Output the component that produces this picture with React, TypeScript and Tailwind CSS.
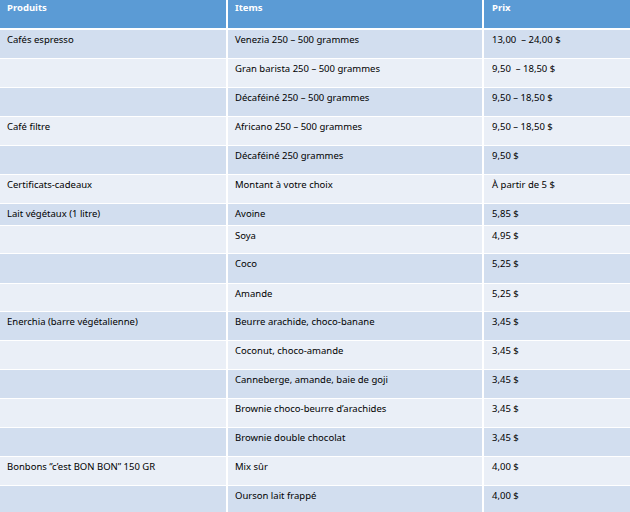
const rows: { product: string; item: string; price: string; h?: string }[] = [
  { product: "Cafés espresso", item: "Venezia 250 – 500 grammes", price: "13,00  – 24,00 $" },
  { product: "", item: "Gran barista 250 – 500 grammes", price: "9,50  – 18,50 $" },
  { product: "", item: "Décaféiné 250 – 500 grammes", price: "9,50 – 18,50 $" },
  { product: "Café filtre", item: "Africano 250 – 500 grammes", price: "9,50 – 18,50 $" },
  { product: "", item: "Décaféiné 250 grammes", price: "9,50 $" },
  { product: "Certificats-cadeaux", item: "Montant à votre choix", price: "À partir de 5 $" },
  { product: "Lait végétaux (1 litre)", item: "Avoine", price: "5,85 $", h: "h-[21px]" },
  { product: "", item: "Soya", price: "4,95 $", h: "h-[27px]" },
  { product: "", item: "Coco", price: "5,25 $", h: "h-[29px]" },
  { product: "", item: "Amande", price: "5,25 $", h: "h-[27px]" },
  { product: "Enerchia (barre végétalienne)", item: "Beurre arachide, choco-banane", price: "3,45 $" },
  { product: "", item: "Coconut, choco-amande", price: "3,45 $" },
  { product: "", item: "Canneberge, amande, baie de goji", price: "3,45 $" },
  { product: "", item: "Brownie choco-beurre d’arachides", price: "3,45 $" },
  { product: "", item: "Brownie double chocolat", price: "3,45 $" },
  { product: "Bonbons ‘’c’est BON BON’’ 150 GR", item: "Mix sûr", price: "4,00 $" },
  { product: "", item: "Ourson lait frappé", price: "4,00 $" },
];

export default function App() {
  return (
    <div
      className="w-[630px] h-[512px] overflow-hidden bg-white text-[9.5px] leading-[14px] text-black"
      style={{ fontFamily: '"Noto Sans", sans-serif' }}
    >
      <div className="grid grid-cols-[226px_254px_1fr] gap-x-[2px] h-[28px] font-bold text-white">
        <div className="bg-[#5b9bd5] pl-[7px] pt-[1px]">Produits</div>
        <div className="bg-[#5b9bd5] pl-[7px] pt-[1px]">Items</div>
        <div className="bg-[#5b9bd5] pl-[8px] pt-[1px]">Prix</div>
      </div>
      <div className="mt-[2px] flex flex-col gap-y-[1px]">
        {rows.map((r, i) => {
          const bg = i % 2 === 0 ? "bg-[#d2deef]" : "bg-[#eaeff7]";
          return (
            <div key={i} className={`grid grid-cols-[226px_254px_1fr] gap-x-[2px] ${r.h ?? "h-[28px]"}`}>
              <div className={`${bg} pl-[7px] pt-[3px] whitespace-pre`}>{r.product}</div>
              <div className={`${bg} pl-[7px] pt-[3px] whitespace-pre`}>{r.item}</div>
              <div className={`${bg} pl-[8px] pt-[3px] whitespace-pre`}>{r.price}</div>
            </div>
          );
        })}
      </div>
    </div>
  );
}
